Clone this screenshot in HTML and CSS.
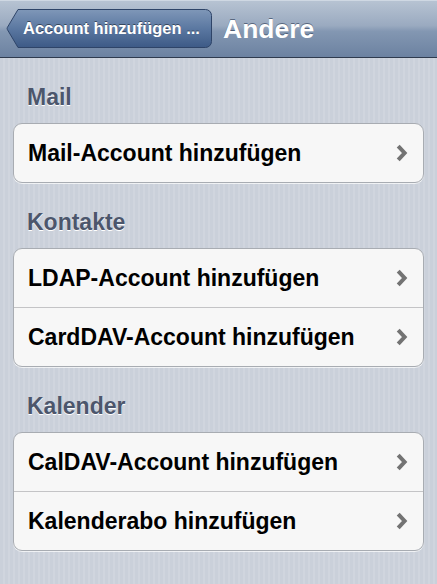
FILE: index.html
```html
<!DOCTYPE html>
<html lang="de">
<head>
<meta charset="utf-8">
<title>Andere</title>
<link rel="stylesheet" href="styles.css">
</head>
<body>
<header class="navbar">
  <a class="back" href="#">
    <svg class="back-shape" width="206" height="39" viewBox="0 0 206 39" aria-hidden="true">
      <defs>
        <linearGradient id="bg" x1="0" y1="0" x2="0" y2="1">
          <stop offset="0" stop-color="#7f97b8"/>
          <stop offset="0.5" stop-color="#5b78a1"/>
          <stop offset="1" stop-color="#3d5a86"/>
        </linearGradient>
      </defs>
      <path d="M12 0.5 H199.5 A6 6 0 0 1 205.5 6.5 V32.5 A6 6 0 0 1 199.5 38.5 H12 L1.4 20.6 Q0.8 19.5 1.4 18.4 Z" fill="url(#bg)" stroke="#2e4468" stroke-width="1"/>
    </svg>
    <span class="back-label">Account hinzufügen ...</span>
  </a>
  <h1 class="title">Andere</h1>
</header>

<main class="content">
  <section class="section">
    <h2 class="section-title">Mail</h2>
    <ul class="group">
      <li class="row"><span class="row-label">Mail-Account hinzufügen</span><svg class="chev" width="12" height="18" viewBox="0 0 12 18"><polyline points="2.2,2.2 8.6,9 2.2,15.8"/></svg></li>
    </ul>
  </section>
  <section class="section">
    <h2 class="section-title">Kontakte</h2>
    <ul class="group">
      <li class="row"><span class="row-label">LDAP-Account hinzufügen</span><svg class="chev" width="12" height="18" viewBox="0 0 12 18"><polyline points="2.2,2.2 8.6,9 2.2,15.8"/></svg></li>
      <li class="row"><span class="row-label">CardDAV-Account hinzufügen</span><svg class="chev" width="12" height="18" viewBox="0 0 12 18"><polyline points="2.2,2.2 8.6,9 2.2,15.8"/></svg></li>
    </ul>
  </section>
  <section class="section">
    <h2 class="section-title">Kalender</h2>
    <ul class="group">
      <li class="row"><span class="row-label">CalDAV-Account hinzufügen</span><svg class="chev" width="12" height="18" viewBox="0 0 12 18"><polyline points="2.2,2.2 8.6,9 2.2,15.8"/></svg></li>
      <li class="row"><span class="row-label">Kalenderabo hinzufügen</span><svg class="chev" width="12" height="18" viewBox="0 0 12 18"><polyline points="2.2,2.2 8.6,9 2.2,15.8"/></svg></li>
    </ul>
  </section>
</main>
</body>
</html>
```

FILE: styles.css
```css
html, body {
  margin: 0;
  padding: 0;
}

body {
  width: 437px;
  height: 584px;
  overflow: hidden;
  font-family: "Liberation Sans", Arial, Helvetica, sans-serif;
  background-color: #cdd3dd;
  background-image: repeating-linear-gradient(90deg, #cad0da 0 3px, #d0d5de 3px 5px);
}

.navbar {
  height: 57px;
  border-bottom: 1px solid #2f3b4e;
  background: linear-gradient(#b8c4d3 0%, #9aaac0 45%, #8397b2 55%, #6c82a1 100%);
  box-shadow: inset 0 1px 0 #cfd8e3;
  display: flex;
  align-items: center;
  padding-left: 6px;
  box-sizing: content-box;
}

.back {
  position: relative;
  display: block;
  width: 206px;
  height: 39px;
  text-decoration: none;
  flex: none;
}

.back-shape {
  position: absolute;
  left: 0;
  top: 0;
  display: block;
}

.back-label {
  position: relative;
  display: block;
  padding-left: 17px;
  font-size: 16.5px;
  font-weight: bold;
  line-height: 39px;
  color: #fff;
  text-shadow: 0 -1px 0 rgba(0, 0, 0, 0.45);
  white-space: nowrap;
}

.title {
  margin: 0 0 0 11px;
  font-size: 26.5px;
  font-weight: bold;
  line-height: 32px;
  color: #fff;
  text-shadow: 0 -1px 0 rgba(40, 55, 80, 0.6);
}

.content {
  padding: 0 13px;
}

.section {
  padding-top: 26px;
}

.section-title {
  margin: 0 0 12px 14px;
  font-size: 23px;
  font-weight: bold;
  line-height: 27px;
  color: #4c566c;
  text-shadow: 0 1px 0 #fff;
}

.group {
  list-style: none;
  margin: 0;
  padding: 0;
  background: #f7f7f7;
  border: 1px solid #a8acb2;
  border-radius: 9px;
  box-shadow: 0 1px 0 rgba(255, 255, 255, 0.7);
}

.row {
  display: flex;
  align-items: center;
  justify-content: space-between;
  height: 58px;
  padding: 0 15px 0 14px;
}

.row + .row {
  border-top: 1px solid #c4c4c6;
}

.row-label {
  font-size: 23px;
  font-weight: bold;
  line-height: 58px;
  color: #000;
  white-space: nowrap;
}

.chev {
  display: block;
  flex: none;
}

.chev polyline {
  fill: none;
  stroke: #737373;
  stroke-width: 4;
  stroke-linecap: butt;
  stroke-linejoin: miter;
}
```
